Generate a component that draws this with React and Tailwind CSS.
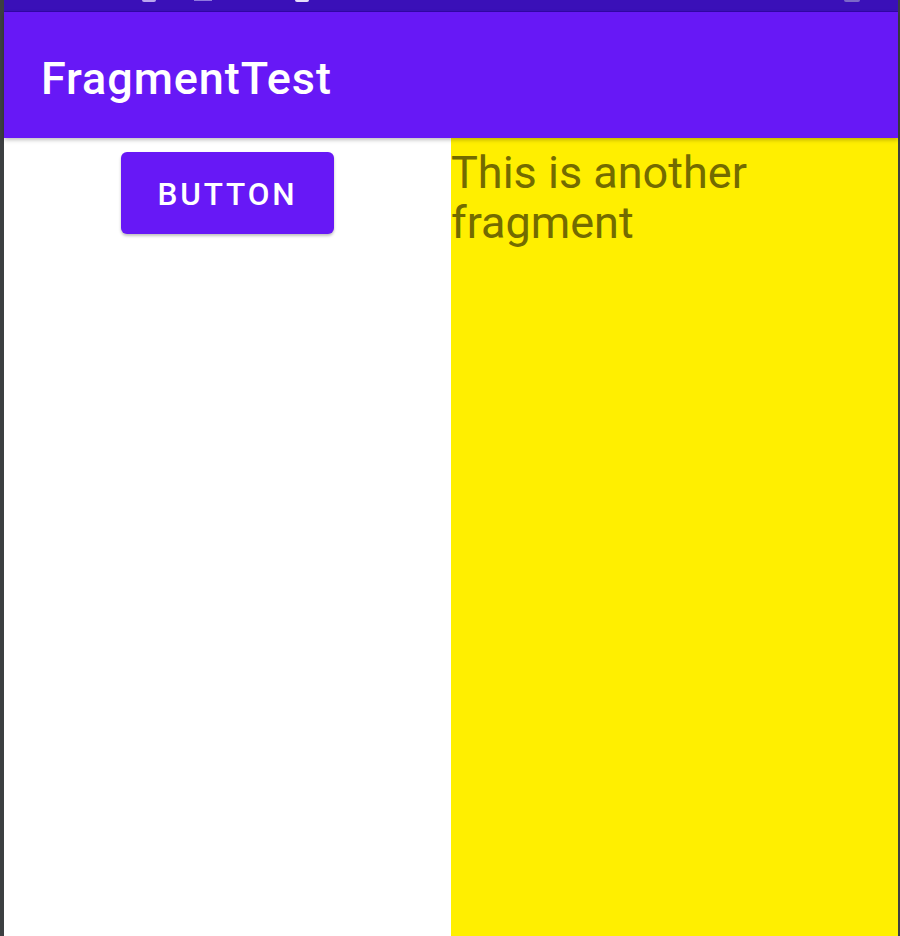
export default function App() {
  return (
    <div className="flex h-[936px] w-[900px] overflow-hidden bg-[#3c3f41] pl-[4px] pr-[2px] font-['Roboto','Liberation_Sans',sans-serif]">
      <div className="flex flex-1 flex-col bg-white">
        <div className="relative h-[12px] border-b border-[#3206a8] bg-[#3a10b8]">
          <div className="absolute left-[138px] top-0 h-[2px] w-[14px] rounded-b bg-[#b9a6ee]" />
          <div className="absolute left-[190px] top-0 h-[1px] w-[18px] bg-[#8f78df]" />
          <div className="absolute left-[291px] top-0 h-[2px] w-[14px] rounded-b bg-[#e6defa]" />
          <div className="absolute left-[840px] top-0 h-[2px] w-[16px] rounded-b bg-[#7b68c8]" />
        </div>
        <div className="relative z-10 flex h-[126px] items-center bg-[#6718f6] pl-[37px] shadow-[0_2px_4px_rgba(0,0,0,0.25)]">
          <span className="pt-[6px] text-[45px] font-medium leading-none tracking-[0.02em] text-white">FragmentTest</span>
        </div>
        <div className="flex flex-1">
          <div className="flex flex-1 justify-center pt-[14px]">
            <button className="h-[82px] w-[213px] rounded-[6px] bg-[#6718f6] pt-[3px] text-[31.5px] font-medium uppercase tracking-[0.09em] text-white shadow-[0_2px_3px_rgba(0,0,0,0.25)]">
              Button
            </button>
          </div>
          <div className="flex-1 bg-[#ffef00] pt-[10px]">
            <p className="text-[45px] leading-[50px] text-[#736b00]">This is another fragment</p>
          </div>
        </div>
      </div>
    </div>
  );
}
